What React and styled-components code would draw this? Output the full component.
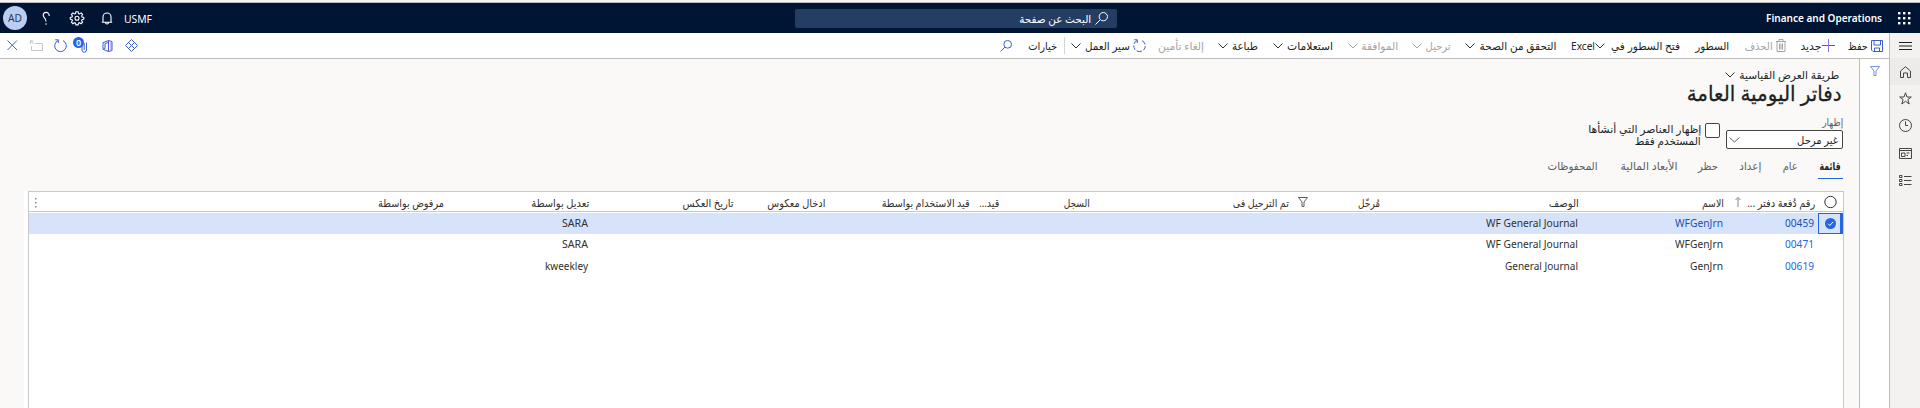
import React, { useLayoutEffect, useRef, useState } from "react";
import styled, { createGlobalStyle } from "styled-components";

const GlobalStyle = createGlobalStyle`
  * { box-sizing: border-box; }
  body {
    margin: 0;
    background: #faf9f8;
    color: #201f1e;
    font-family: "Noto Sans", "DejaVu Sans", sans-serif;
    font-size: 11px;
    overflow: hidden;
  }
`;

/* Text squeezed or stretched to the width its slot allows. */
const FitBox = styled.span`
  display: block;
  flex: none;
  width: ${(p) => p.$w}px;
  height: ${(p) => p.$lh}px;
  line-height: ${(p) => p.$lh}px;
  font-size: ${(p) => p.$size}px;
  font-weight: ${(p) => p.$weight};
  color: ${(p) => p.$color};
  margin-top: ${(p) => p.$dy}px;
`;
const FitText = styled.span`
  display: inline-block;
  white-space: nowrap;
  transform-origin: ${(p) => (p.$ltr ? "left" : "right")} center;
`;

function Fit({ w, size = 11, lh = 16, weight = 400, color = "inherit", dy = 0, ltr, children }) {
  const ref = useRef(null);
  const [k, setK] = useState(1);
  useLayoutEffect(() => {
    if (ref.current.offsetWidth) setK(w / ref.current.getBoundingClientRect().width);
  }, []);
  return (
    <FitBox $w={w} $size={size} $lh={lh} $weight={weight} $color={color} $dy={dy} dir={ltr ? "ltr" : "rtl"}>
      <FitText ref={ref} $ltr={ltr} style={{ transform: k === 1 ? undefined : `scaleX(${k})` }}>
        {children}
      </FitText>
    </FitBox>
  );
}

const Svg = styled.svg`
  display: block;
  flex: none;
  fill: none;
  stroke: ${(p) => p.$c || "#323130"};
  stroke-width: ${(p) => p.$sw || 1};
  margin-right: ${(p) => p.$gap || 0}px;
  overflow: visible;
`;
const Icon = ({ w, h = w, c, sw, gap, children }) => (
  <Svg width={w} height={h} viewBox={`0 0 ${w} ${h}`} $c={c} $sw={sw} $gap={gap}>
    {children}
  </Svg>
);
const Chevron = ({ gap = 4, c = "#323130", w = 10 }) => (
  <Icon w={w} h={6} c={c} gap={gap}>
    <path d={`M.5 .5L${w / 2} 5L${w - 0.5} .5`} />
  </Icon>
);
const Magnifier = ({ w, c, gap }) => (
  <Icon w={w} c={c} gap={gap}>
    <circle cx={w * 0.64} cy={w * 0.36} r={w * 0.32} />
    <path d={`M${w * 0.41} ${w * 0.59}L.5 ${w - 0.5}`} />
  </Icon>
);
const Funnel = ({ c, w = 10, gap }) => (
  <Icon w={w} c={c} gap={gap}>
    <path d={`M.5 .5H${w - 0.5}L${w * 0.6} ${w * 0.5}V${w - 0.5}H${w * 0.4}V${w * 0.5}Z`} />
  </Icon>
);
const Cycle = ({ w = 13, gap, dash }) => (
  <Icon w={w} c="#3b5fd0" gap={gap}>
    <path d="M9 1.6A5.8 5.8 0 1 1 4 1.6" strokeDasharray={dash} />
    <path d="M1.2 .8H4.3V4" />
  </Icon>
);

const Page = styled.div`
  width: 1920px;
  height: 408px;
  display: flex;
  flex-direction: column;
  overflow: hidden;
`;
const TopEdge = styled.div`
  height: 3px;
  flex: none;
  background: #f5f5f5;
  border-bottom: 1px solid #bdbdbd;
`;
const Header = styled.header`
  height: 30px;
  flex: none;
  background: #001433;
  color: #fff;
  display: flex;
  align-items: center;
  padding: 0 9px 0 3px;
`;
const HeaderSearch = styled.div`
  width: 322px;
  height: 19px;
  border-radius: 2px;
  background: #243d63;
  display: flex;
  align-items: center;
  padding-right: 9px;
  margin-right: 649px;
  margin-left: auto;
`;
const Avatar = styled.div`
  width: 24px;
  height: 24px;
  border-radius: 50%;
  background: #b9cdf5;
  color: #2f3b52;
  display: flex;
  align-items: center;
  justify-content: center;
`;
const HeaderTools = styled.div`
  display: flex;
  align-items: center;
  direction: ltr;
`;
const Slot = styled.div`
  width: ${(p) => p.$w}px;
  display: flex;
  justify-content: center;
`;
const Columns = styled.div`
  flex: 1;
  display: flex;
  min-height: 0;
`;
const SideNav = styled.nav`
  width: 31px;
  flex: none;
  background: #f3f2f1;
  border-left: 1px solid #bdbdbd;
`;
const NavItem = styled.div`
  height: ${(p) => p.$h || 27}px;
  display: flex;
  align-items: center;
  justify-content: center;
  background: ${(p) => (p.$active ? "#edebe9" : "none")};
`;
const Workspace = styled.div`
  flex: 1;
  min-width: 0;
  display: flex;
  flex-direction: column;
`;
const CommandBar = styled.div`
  height: 26px;
  flex: none;
  background: #fff;
  border-bottom: 1px solid #bdbdbd;
  display: flex;
  align-items: center;
  padding: 0 6px 0 6px;
`;
const Command = styled.div`
  display: flex;
  align-items: center;
  margin-right: ${(p) => p.$gap}px;
  color: ${(p) => (p.$off ? "#a6a4a2" : "#201f1e")};
`;
const Divider = styled.div`
  width: 1px;
  height: 17px;
  background: #d6d4d2;
  margin-right: 6px;
`;
const PageTools = styled.div`
  display: flex;
  align-items: center;
  direction: ltr;
  margin-right: auto;
`;
const Clip = styled.div`
  position: relative;
  width: 15px;
  height: 16px;
  margin-left: 6px;
  margin-bottom: 2px;
`;
const ClipIcon = styled.div`
  padding: 4px 0 0 8px;
`;
const Badge = styled.div`
  position: absolute;
  left: 0;
  top: 0;
  width: 11px;
  height: 11px;
  border-radius: 50%;
  background: #2266e3;
  color: #fff;
  font-size: 9px;
  font-weight: 600;
  line-height: 11px;
  text-align: center;
`;
const Body = styled.div`
  flex: 1;
  display: flex;
  min-height: 0;
`;
const FilterRail = styled.aside`
  width: 30px;
  flex: none;
  background: #fff;
  border-left: 1px solid #bdbdbd;
  display: flex;
  justify-content: center;
  padding-top: 7px;
`;
const Content = styled.main`
  flex: 1;
  min-width: 0;
  display: flex;
  flex-direction: column;
  padding: 8px 15px 0 24px;
`;
const ViewName = styled.div`
  display: flex;
  align-items: center;
  height: 16px;
  padding-right: 5px;
`;
const Title = styled.h1`
  margin: 0;
  height: 30px;
  padding-right: 2px;
  color: #201f1e;
  -webkit-text-stroke: 0.3px #201f1e;
`;
const FilterFields = styled.div`
  display: flex;
  height: 36px;
  padding-right: 1px;
`;
const Field = styled.div`
  width: 117px;
  padding-top: 2px;
`;
const Select = styled.div`
  width: 117px;
  height: 19px;
  margin-top: 1px;
  border: 1px solid #484644;
  border-radius: 2px;
  background: #fff;
  display: flex;
  align-items: center;
  justify-content: space-between;
  padding: 0 4px 0 2px;
`;
const Checkbox = styled.div`
  width: 15px;
  height: 15px;
  margin: 10px 6px 0 4px;
  border: 1px solid #484644;
  border-radius: 2px;
  background: #fff;
`;
const CheckLabel = styled.div`
  padding-top: 10px;
`;
const Tabs = styled.div`
  display: flex;
  height: 42px;
  padding: 8px 1px 0 0;
  color: #605e5c;
`;
const Tab = styled.div`
  height: 22px;
  margin-right: ${(p) => p.$gap}px;
  padding: 0 2px;
  border-bottom: 1px solid ${(p) => (p.$active ? "#2266e3" : "transparent")};
  color: ${(p) => (p.$active ? "#201f1e" : "inherit")};
`;
const GridFrame = styled.section`
  flex: 1;
  background: #fff;
  padding-left: 4px;
`;
const Grid = styled.div`
  height: 100%;
  border: 1px solid #c8c8c8;
  border-bottom: 0;
`;
const columns =
  "25px 94px 145px 199px 91px 199px 91px 29px 145px 91px 145px 145px 200px 1fr";
const HeadRow = styled.div`
  display: grid;
  grid-template-columns: ${columns};
  align-items: center;
  height: 20px;
  border-bottom: 1px solid #c8c8c8;
  margin-bottom: 1px;
  color: #323130;
`;
const Row = styled.div`
  display: grid;
  grid-template-columns: ${columns};
  align-items: center;
  height: ${(p) => p.$h}px;
  background: ${(p) => (p.$selected ? "#d7e3fb" : "#fff")};
`;
const Cell = styled.div`
  display: flex;
  align-items: center;
  padding-right: ${(p) => p.$pad || 0}px;
`;
const SelectCell = styled.div`
  height: 21px;
  border: 1px solid #2266e3;
  border-right-width: 3px;
  display: flex;
  align-items: center;
  padding-right: 4px;
`;
const MoreCell = styled.div`
  display: flex;
  justify-content: flex-end;
  padding-left: 6px;
  padding-top: 2px;
`;

const blue = "#3b5fd0";
const grey = "#a6a4a2";

const commands = [
  { t: "السطور", w: 34, gap: 16 },
  { t: "فتح السطور في", w: 69, gap: 15, chev: 6, after: "Excel" },
  { t: "التحقق من الصحة", w: 77, gap: 15, chev: 4 },
  { t: "ترحيل", w: 25, gap: 14, chev: 4, off: true },
  { t: "الموافقة", w: 37, gap: 14, chev: 3, off: true },
  { t: "استعلامات", w: 46, gap: 15, chev: 4 },
  { t: "طباعة", w: 26, gap: 15, chev: 4 },
  { t: "إلغاء تأمين", w: 46, gap: 14, off: true },
];

const tabs = [
  { t: "قائمة", w: 21, gap: 0, active: true },
  { t: "عام", w: 15, gap: 18 },
  { t: "إعداد", w: 22, gap: 18 },
  { t: "حظر", w: 20, gap: 17 },
  { t: "الأبعاد المالية", w: 57, gap: 17 },
  { t: "المحفوظات", w: 50, gap: 18 },
];

const heads = [
  { t: "الاسم", w: 22 },
  { t: "الوصف", w: 30 },
  { t: "مُرحّل", w: 22 },
  { t: "تم الترحيل فى", w: 56, funnel: true },
  { t: "السجل", w: 26 },
  { t: "قيد...", w: 20 },
  { t: "قيد الاستخدام بواسطة", w: 88 },
  { t: "ادخال معكوس", w: 58 },
  { t: "تاريخ العكس", w: 51 },
  { t: "تعديل بواسطة", w: 58 },
  { t: "مرفوض بواسطة", w: 66 },
];

const rows = [
  { no: "00459", name: "WFGenJrn", nw: 48, desc: "WF General Journal", dw: 92, by: "SARA", bw: 26, selected: true, h: 21, dy: -2 },
  { no: "00471", name: "WFGenJrn", nw: 48, desc: "WF General Journal", dw: 92, by: "SARA", bw: 26, h: 21, dy: -2 },
  { no: "00619", name: "GenJrn", nw: 33, desc: "General Journal", dw: 73, by: "kweekley", bw: 43, h: 22, dy: 0 },
];

function TopHeader() {
  return (
    <Header>
      <Icon w={13} c="none">
        <g fill="#fff">
          {[0, 5, 10].map((x) => [0, 5, 10].map((y) => <rect key={`${x}-${y}`} x={x} y={y} width="2.4" height="2.4" />))}
        </g>
      </Icon>
      <Slot $w={16} />
      <Fit w={116} size={11.5} weight={600} ltr>Finance and Operations</Fit>
      <HeaderSearch>
        <Magnifier w={13} c="#fff" />
        <Slot $w={4} />
        <Fit w={72} dy={1}>البحث عن صفحة</Fit>
      </HeaderSearch>
      <HeaderTools>
        <Avatar><Fit w={14} size={10.5} ltr>AD</Fit></Avatar>
        <Slot $w={38}>
          <Icon w={8} h={13} c="#fff" sw={1.1}>
            <path d="M7.200 4V3.400A3 3 0 0 0 1.200 3.400C1.200 5.600 4 6 4 9.500M4 11.300V12.700" />
          </Icon>
        </Slot>
        <Slot $w={24}>
          <Icon w={14} c="#fff" sw={1.1}>
            <path d="M5.9 .7h2.2l.4 1.8 1 .4 1.6-1 1.5 1.5-1 1.6.4 1 1.8.4v1.8l-1.8.5-.4 1 1 1.5-1.5 1.5-1.6-1-1 .5-.4 1.7H5.9l-.4-1.7-1-.5-1.6 1-1.5-1.5 1-1.5-.4-1L.3 8.200V6.400L2 6l.4-1-1-1.600L2.900 1.900l1.600 1 1-.4Z" />
            <circle cx="7" cy="7.200" r="2" />
          </Icon>
        </Slot>
        <Slot $w={35}>
          <Icon w={12} h={13} c="#fff" sw={1.1}>
            <path d="M.8 10.300H11.200M2 10.300V5A4 4 0 0 1 10 5V10.300M4.500 10.500A1.500 1.500 0 0 0 7.500 10.500" />
          </Icon>
        </Slot>
        <Fit w={28} dy={1} ltr>USMF</Fit>
      </HeaderTools>
    </Header>
  );
}

function Commands() {
  return (
    <CommandBar>
      <Command $gap={0}>
        <Icon w={12} c={blue}>
          <path d="M.5 .5H11.500V11.500H2L.5 10ZM3 .5V5H9.500V.5M3.500 11.500V8H8.500V11.500" />
        </Icon>
        <Slot $w={3} />
        <Fit w={20} dy={1}>حفظ</Fit>
      </Command>
      <Command $gap={13}>
        <Icon w={13} c="#2266e3"><path d="M0 6.500H13" /><path d="M6.500 0V13" stroke="#a06be0" /></Icon>
        <Slot $w={1} />
        <Fit w={21} dy={1}>جديد</Fit>
      </Command>
      <Command $gap={14} $off>
        <Icon w={10} h={13} c={grey}>
          <path d="M0 2.500H10M3 2.500V.5H7V2.500M1 2.500V12.500H9V2.500M3.500 4.500V10.500M5 4.500V10.500M6.500 4.500V10.500" />
        </Icon>
        <Slot $w={3} />
        <Fit w={28} dy={1}>الحذف</Fit>
      </Command>
      {commands.map((c) => (
        <Command key={c.t} $gap={c.gap} $off={c.off}>
          <Fit w={c.w} dy={1}>{c.t}</Fit>
          {c.chev && <Chevron gap={c.chev} c={c.off ? grey : undefined} />}
          {c.after && <Fit w={24} size={11.5} dy={1} ltr>{c.after}</Fit>}
        </Command>
      ))}
      <Command $gap={12}>
        <Cycle dash="5 1.500" />
        <Slot $w={3} />
        <Fit w={45} dy={1}>سير العمل</Fit>
        <Chevron />
      </Command>
      <Divider />
      <Command $gap={7}><Fit w={29} dy={1}>خيارات</Fit></Command>
      <Magnifier w={12} c={blue} gap={16} />
      <PageTools>
        <Icon w={13} c={blue}><path d="M1.500 1.500L11 11M11 1.500L1.500 11" /></Icon>
        <Slot $w={11} />
        <Icon w={13} h={12} c="#c8c6c4"><path d="M5 3.500H12.500V10.500H1.500V6M0 1H3.500M.5 .5V4M.5 1L4 4" /></Icon>
        <Slot $w={11} />
        <Cycle />
        <Clip>
          <ClipIcon>
            <Icon w={7} h={12} c={blue}><path d="M1 2V9A2.200 2.200 0 0 0 5.500 9V1.500M3.200 2V9" /></Icon>
          </ClipIcon>
          <Badge>0</Badge>
        </Clip>
        <Slot $w={14} />
        <Icon w={11} h={12} c={blue}>
          <path d="M6.500 .5L1 2.700V9.300L3 8.500V3.500L6.500 2.500" />
          <path d="M6.500 .5V11.500M1 9.300L6.500 11.500L10 10.500V1.500L6.500 .5" />
          <path d="M9 1.500V10.500" stroke="#b06be0" />
        </Icon>
        <Slot $w={12} />
        <Icon w={13} c={blue}><path d="M6.500 .5L12.500 6.500L6.500 12.500L.5 6.500ZM3.500 3.500L9.500 9.500M9.500 3.500L3.500 9.500" /></Icon>
      </PageTools>
    </CommandBar>
  );
}

function Navigation() {
  return (
    <SideNav>
      <NavItem $h={25}>
        <Icon w={13} h={8} c="#201f1e"><path d="M0 .5H13M0 4H13M0 7.500H13" /></Icon>
      </NavItem>
      <NavItem $active>
        <Icon w={11} h={12} c="#484644"><path d="M.5 5L5.500 .7L10.500 5V11.500H7.500V7H3.500V11.500H.5Z" /></Icon>
      </NavItem>
      <NavItem>
        <Icon w={13} c="#484644"><path d="M6.500 .8L8 5H12.300L8.900 7.600L10.200 12L6.500 9.300L2.800 12L4.100 7.600L.7 5H5Z" /></Icon>
      </NavItem>
      <NavItem>
        <Icon w={13} c="#484644"><circle cx="6.500" cy="6.500" r="6" /><path d="M6.500 2.500V6.500H9" /></Icon>
      </NavItem>
      <NavItem $h={28}>
        <Icon w={13} h={11} c="#484644"><path d="M.5 .5H12.500V10.500H.5ZM.5 2.500H12.500M2.500 5H6V8.500H2.500ZM7.500 5H10.500M7.500 7.500H9" /></Icon>
      </NavItem>
      <NavItem>
        <Icon w={13} h={11} c="#484644"><path d="M.5 .5H3V2.500H.5ZM.5 4.500H3V6.500H.5ZM.5 8.500H3V10.500H.5ZM5 1.500H12.500M5 5.500H12.500M5 9.500H12.500" /></Icon>
      </NavItem>
    </SideNav>
  );
}

function JournalGrid() {
  return (
    <GridFrame>
      <Grid>
        <HeadRow>
          <Cell $pad={6}><Icon w={13}><circle cx="6.500" cy="7" r="5.700" /></Icon></Cell>
          <Cell $pad={3}>
            <Fit w={68} size={11} dy={3}>رقم دُفعة دفتر ...</Fit>
            <Icon w={6} h={10} c="#8a8886" gap={6}><path d="M3 10V.5M.5 3L3 .5L5.500 3" /></Icon>
          </Cell>
          {heads.map((h) => (
            <Cell key={h.t}>
              {h.funnel && <Funnel c="#605e5c" gap={-19} />}
              {h.funnel && <Slot $w={9} />}
              <Fit w={h.w} size={11} dy={3}>{h.t}</Fit>
            </Cell>
          ))}
          <MoreCell>
            <Icon w={2} h={10} c="none"><g fill="#8a8886"><rect width="1.500" height="1.500" /><rect y="4" width="1.500" height="1.500" /><rect y="8" width="1.500" height="1.500" /></g></Icon>
          </MoreCell>
        </HeadRow>
        {rows.map((r) => (
          <Row key={r.no} $h={r.h} $selected={r.selected}>
            {r.selected ? (
              <SelectCell>
                <Icon w={11}><circle cx="5.500" cy="5.500" r="5.500" fill="#2266e3" stroke="none" /><path d="M3 5.700L4.800 7.500L8.200 3.800" stroke="#fff" /></Icon>
              </SelectCell>
            ) : <Cell />}
            <Cell $pad={4}><Fit w={29} dy={r.dy} color={r.selected ? "#1c4fb5" : "#2266e3"} ltr>{r.no}</Fit></Cell>
            <Cell $pad={1}><Fit w={r.nw} dy={r.dy} color={r.selected ? "#1c4fb5" : "#323130"} ltr>{r.name}</Fit></Cell>
            <Cell $pad={1}><Fit w={r.dw} dy={r.dy} color="#323130" ltr>{r.desc}</Fit></Cell>
            <Cell /><Cell /><Cell /><Cell /><Cell /><Cell /><Cell />
            <Cell $pad={1}><Fit w={r.bw} dy={r.dy} color="#323130" ltr>{r.by}</Fit></Cell>
          </Row>
        ))}
      </Grid>
    </GridFrame>
  );
}

export default function App() {
  return (
    <Page dir="rtl">
      <GlobalStyle />
      <TopEdge />
      <TopHeader />
      <Columns>
        <Navigation />
        <Workspace>
          <Commands />
          <Body>
            <FilterRail><Funnel c="#7a8fe0" /></FilterRail>
            <Content>
              <ViewName>
                <Fit w={100}>طريقة العرض القياسية</Fit>
                <Chevron />
              </ViewName>
              <Title><Fit w={155} size={21} lh={26} dy={-3}>دفاتر اليومية العامة</Fit></Title>
              <FilterFields>
                <Field>
                  <Fit w={21} size={10} lh={14} color="#605e5c">إظهار</Fit>
                  <Select>
                    <Fit w={41}>غير مرحل</Fit>
                    <Chevron w={11} c="#605e5c" />
                  </Select>
                </Field>
                <Checkbox />
                <CheckLabel>
                  <Fit w={113} lh={12}>إظهار العناصر التي أنشأها</Fit>
                  <Fit w={66} lh={12}>المستخدم فقط</Fit>
                </CheckLabel>
              </FilterFields>
              <Tabs>
                {tabs.map((t) => (
                  <Tab key={t.t} $gap={t.gap} $active={t.active}>
                    <Fit w={t.w} dy={1} weight={t.active ? 700 : 400}>{t.t}</Fit>
                  </Tab>
                ))}
              </Tabs>
              <JournalGrid />
            </Content>
          </Body>
        </Workspace>
      </Columns>
    </Page>
  );
}
